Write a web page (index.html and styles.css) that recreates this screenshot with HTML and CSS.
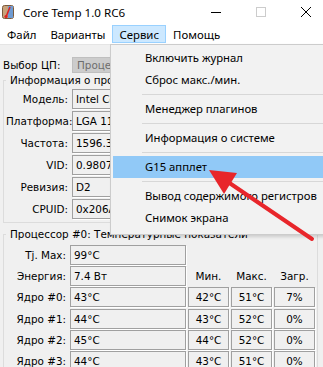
FILE: index.html
```html
<!DOCTYPE html>
<html lang="ru">
<head>
    <meta charset="UTF-8">
    <title>Core Temp 1.0 RC6</title>
    <link rel="stylesheet" href="styles.css">
</head>
<body>

<div id="window">
    <div class="titlebar">
        <svg class="app-icon" width="12" height="14" viewBox="0 0 12 14">
            <rect x="0.5" y="0.5" width="11" height="13" rx="2" fill="#c9a27a" stroke="#7a5a3c"/>
            <rect x="6" y="1" width="5" height="12" fill="#6f9bd1"/>
            <line x1="8" y1="2" x2="4" y2="12" stroke="#d22" stroke-width="1.6"/>
            <circle cx="4" cy="11.5" r="1.6" fill="#d22"/>
        </svg>
        <span class="title">Core Temp 1.0 RC6</span>
        <div class="controls">
            <span class="ctl">
                <svg width="10" height="10" viewBox="0 0 10 10"><line x1="0" y1="5.5" x2="10" y2="5.5" stroke="#000"/></svg>
            </span>
            <span class="ctl">
                <svg width="10" height="10" viewBox="0 0 10 10"><rect x="0.5" y="0.5" width="9" height="9" fill="none" stroke="#ccc"/></svg>
            </span>
            <span class="ctl">
                <svg width="10" height="10" viewBox="0 0 10 10"><path d="M0 0 L10 10 M10 0 L0 10" stroke="#000" stroke-width="1"/></svg>
            </span>
        </div>
    </div>

    <div class="menubar">
        <span class="menu-item">Файл</span>
        <span class="menu-item">Варианты</span>
        <span class="menu-item open">Сервис</span>
        <span class="menu-item">Помощь</span>
    </div>

    <div class="content">
        <div class="cpu-select">
            <span class="label">Выбор ЦП:</span>
            <div class="combo">Процессор #0</div>
        </div>

        <fieldset class="group">
            <legend>Информация о процессоре</legend>
            <div class="info-grid">
                <span class="label">Модель:</span><div class="field">Intel Core i5 2410M</div>
                <span class="label">Платформа:</span><div class="field">LGA 1155</div>
                <span class="label">Частота:</span><div class="field">1596.33MHz</div>
                <span class="label">VID:</span><div class="field">0.9807 v</div>
                <span class="label">Ревизия:</span><div class="field">D2</div>
                <span class="label">CPUID:</span><div class="field">0x206A7</div>
            </div>
        </fieldset>

        <fieldset class="group temps">
            <legend>Процессор #0: Температурные показатели</legend>
            <div class="temp-grid">
                <span class="label">Tj. Max:</span><div class="field">99°C</div>
                <span></span><span></span><span></span>

                <span class="label">Энергия:</span><div class="field">7.4 Вт</div>
                <span class="head">Мин.</span><span class="head">Макс.</span><span class="head">Загр.</span>

                <span class="label">Ядро #0:</span><div class="field">43°C</div>
                <div class="field num">42°C</div><div class="field num">51°C</div><div class="field num">7%</div>

                <span class="label">Ядро #1:</span><div class="field">44°C</div>
                <div class="field num">43°C</div><div class="field num">52°C</div><div class="field num">0%</div>

                <span class="label">Ядро #2:</span><div class="field">45°C</div>
                <div class="field num">44°C</div><div class="field num">52°C</div><div class="field num">0%</div>

                <span class="label">Ядро #3:</span><div class="field">44°C</div>
                <div class="field num">43°C</div><div class="field num">51°C</div><div class="field num">0%</div>
            </div>
        </fieldset>
    </div>

    <!-- open "Сервис" menu -->
    <div class="dropdown">
        <div class="dd-item">Включить журнал</div>
        <div class="dd-item">Сброс макс./мин.</div>
        <div class="dd-sep"></div>
        <div class="dd-item">Менеджер плагинов</div>
        <div class="dd-sep"></div>
        <div class="dd-item">Информация о системе</div>
        <div class="dd-sep"></div>
        <div class="dd-item active">G15 апплет</div>
        <div class="dd-sep"></div>
        <div class="dd-item">Вывод содержимого регистров</div>
        <div class="dd-item">Снимок экрана</div>
    </div>

    <svg class="arrow" width="328" height="367" viewBox="0 0 328 367">
        <line x1="312" y1="239" x2="228" y2="182" stroke="#e8262b" stroke-width="4" stroke-linecap="round"/>
        <polygon points="209,170 237,173 224,194" fill="#e8262b"/>
    </svg>
</div>

</body>
</html>
```

FILE: styles.css
```css
html,
body {
    margin: 0;
    padding: 0;
    overflow: hidden;
}

body {
    font-family: "DejaVu Sans", sans-serif;
    font-size: 10.4px;
    color: #000;
    background-color: #f0f0f0;
}

#window {
    position: relative;
    width: 328px;
    height: 367px;
    background-color: #f0f0f0;
    overflow: hidden;
}

/* title bar */
.titlebar {
    display: flex;
    align-items: center;
    height: 24px;
    background-color: #fff;
    font-family: "Noto Sans", sans-serif;
    font-size: 11.6px;
}

.app-icon {
    margin-left: 2px;
    margin-right: 9px;
}

.controls {
    display: flex;
    margin-left: auto;
    height: 24px;
}

.ctl {
    display: flex;
    align-items: center;
    justify-content: center;
    width: 45px;
}

/* menu bar */
.menubar {
    display: flex;
    height: 19px;
    padding-top: 1px;
    background-color: #fff;
    border-bottom: 1px solid #e5e5e5;
    font-family: "Noto Sans", sans-serif;
    font-size: 11.4px;
}

.menu-item {
    padding: 0 6px;
    height: 18px;
    line-height: 17px;
    border: 1px solid transparent;
    box-sizing: border-box;
}

.menu-item.open {
    background-color: #cce8ff;
    border-color: #99d1ff;
}

/* dialog content */
.content {
    padding: 12px 0 0 3px;
}

.label {
    text-align: right;
    white-space: nowrap;
}

.cpu-select {
    display: flex;
    align-items: center;
    height: 16px;
}

.cpu-select .label {
    width: 69px;
    text-align: left;
}

.combo {
    width: 120px;
    height: 16px;
    line-height: 14px;
    padding-left: 4px;
    box-sizing: border-box;
    background-color: #ccc;
    border: 1px solid #bfbfbf;
    color: #6d6d6d;
    white-space: nowrap;
    overflow: hidden;
}

.group {
    margin: 0;
    padding: 0 2px 3px 2px;
    width: 315px;
    box-sizing: border-box;
    border: 1px solid #dcdcdc;
}

.group legend {
    padding: 0 4px;
    line-height: 14px;
}

.info-grid {
    display: grid;
    grid-template-columns: 62px 240px;
    column-gap: 4px;
    row-gap: 2px;
    margin-top: 2px;
    align-items: center;
}

.field {
    height: 20px;
    line-height: 18px;
    padding-left: 3px;
    box-sizing: border-box;
    border: 1px solid #a0a0a0;
    box-shadow: 1px 1px 0 #fff;
    white-space: nowrap;
    overflow: hidden;
}

.temps {
    margin-top: 4px;
    height: 200px;
}

.temp-grid {
    display: grid;
    grid-template-columns: 62px 116px 41px 41px 41px;
    column-gap: 2px;
    row-gap: 1.2px;
    margin-top: 4px;
    align-items: center;
}

.temp-grid .label {
    margin-right: 2px;
}

.field.num {
    padding-left: 0;
    text-align: center;
}

.head {
    text-align: center;
}

/* dropdown menu */
.dropdown {
    position: absolute;
    left: 110px;
    top: 44px;
    width: 230px;
    padding: 2px 2px 5px 2px;
    background-color: #f2f2f2;
    border: 1px solid #ccc;
    box-shadow: 2px 2px 3px rgba(0, 0, 0, 0.15);
    font-family: "Noto Sans", sans-serif;
    font-size: 11.3px;
}

.dd-item {
    height: 22px;
    line-height: 22px;
    padding-left: 32px;
    white-space: nowrap;
}

.dd-item.active {
    background-color: #91c9f7;
}

.dd-sep {
    height: 1px;
    margin: 3px 0 3px 29px;
    background-color: #d7d7d7;
}

.arrow {
    position: absolute;
    left: 0;
    top: 0;
    pointer-events: none;
}
```
